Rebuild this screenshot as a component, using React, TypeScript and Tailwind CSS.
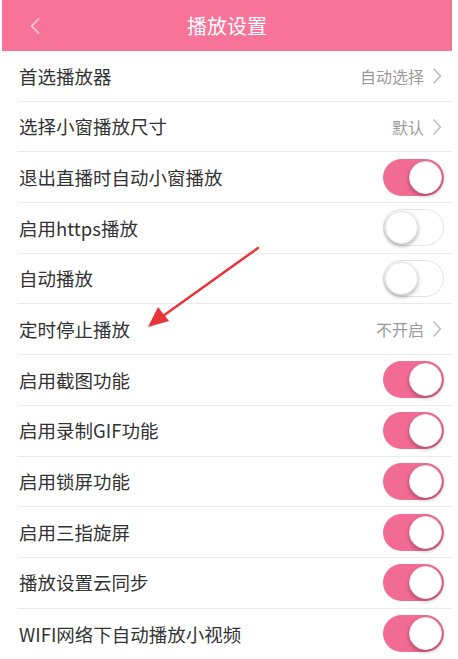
import React from "react";

type Row = {
  label: string;
  value?: string;
  on?: boolean;
};

const rows: Row[] = [
  { label: "首选播放器", value: "自动选择" },
  { label: "选择小窗播放尺寸", value: "默认" },
  { label: "退出直播时自动小窗播放", on: true },
  { label: "启用https播放", on: false },
  { label: "自动播放", on: false },
  { label: "定时停止播放", value: "不开启" },
  { label: "启用截图功能", on: true },
  { label: "启用录制GIF功能", on: true },
  { label: "启用锁屏功能", on: true },
  { label: "启用三指旋屏", on: true },
  { label: "播放设置云同步", on: true },
  { label: "WIFI网络下自动播放小视频", on: true },
];

const Toggle = ({ on }: { on: boolean }) => {
  return (
    <div
      className={
        on
          ? "w-[61px] h-[37px] rounded-full bg-[#f26b94] flex items-center justify-end pr-[2px]"
          : "w-[61px] h-[37px] rounded-full bg-white border border-[#e3e3e3] flex items-center justify-start pl-[1px]"
      }
    >
      <div className="w-[33px] h-[33px] rounded-full bg-white border border-[#e6e6e6] shadow-[0_2px_4px_rgba(0,0,0,0.3)]" />
    </div>
  );
};

const Chevron = () => (
  <svg width="10" height="18" viewBox="0 0 10 18" className="ml-[8px]">
    <path d="M1.5 1.5 L8.5 9 L1.5 16.5" fill="none" stroke="#b8b8b8" strokeWidth="1.4" />
  </svg>
);

const App = () => {
  return (
    <div
      className="relative w-[458px] h-[659px] bg-white overflow-hidden"
      style={{ fontFamily: '"Noto Sans CJK SC", "Noto Sans", sans-serif' }}
    >
      <div className="ml-[2px] w-[450px] h-[51px] bg-[#f7739a] flex items-center relative">
        <svg width="12" height="18" viewBox="0 0 12 18" className="absolute left-[27px] top-[17px]">
          <path d="M10 1.5 L2.5 9 L10 16.5" fill="none" stroke="#fbc2d3" strokeWidth="1.8" />
        </svg>
        <div className="w-full text-center text-white text-[20px] leading-none">播放设置</div>
      </div>
      <div className="ml-[18px] w-[434px]">
        {rows.map((r, i) => (
          <div
            key={r.label}
            className={
              i === rows.length - 1
                ? "h-[50.7px] flex items-center justify-between"
                : "h-[50.7px] flex items-center justify-between border-b border-[#ececec]"
            }
          >
            <span className="text-[18.5px] text-[#333333] leading-none ml-[1px]">{r.label}</span>
            {r.value !== undefined ? (
              <div className="flex items-center mr-[10px]">
                <span className="text-[16px] text-[#9a9a9a] leading-none">{r.value}</span>
                <Chevron />
              </div>
            ) : (
              <div className="mr-[8px]">
                <Toggle on={!!r.on} />
              </div>
            )}
          </div>
        ))}
      </div>
      {/* red annotation arrow */}
      <svg className="absolute left-0 top-0 pointer-events-none" width="458" height="659">
        <line x1="258" y1="248" x2="163" y2="316" stroke="#e8353a" strokeWidth="2.5" strokeLinecap="round" />
        <polygon points="148,327 158,307 169,321" fill="#e8353a" />
      </svg>
    </div>
  );
};

export default App;
